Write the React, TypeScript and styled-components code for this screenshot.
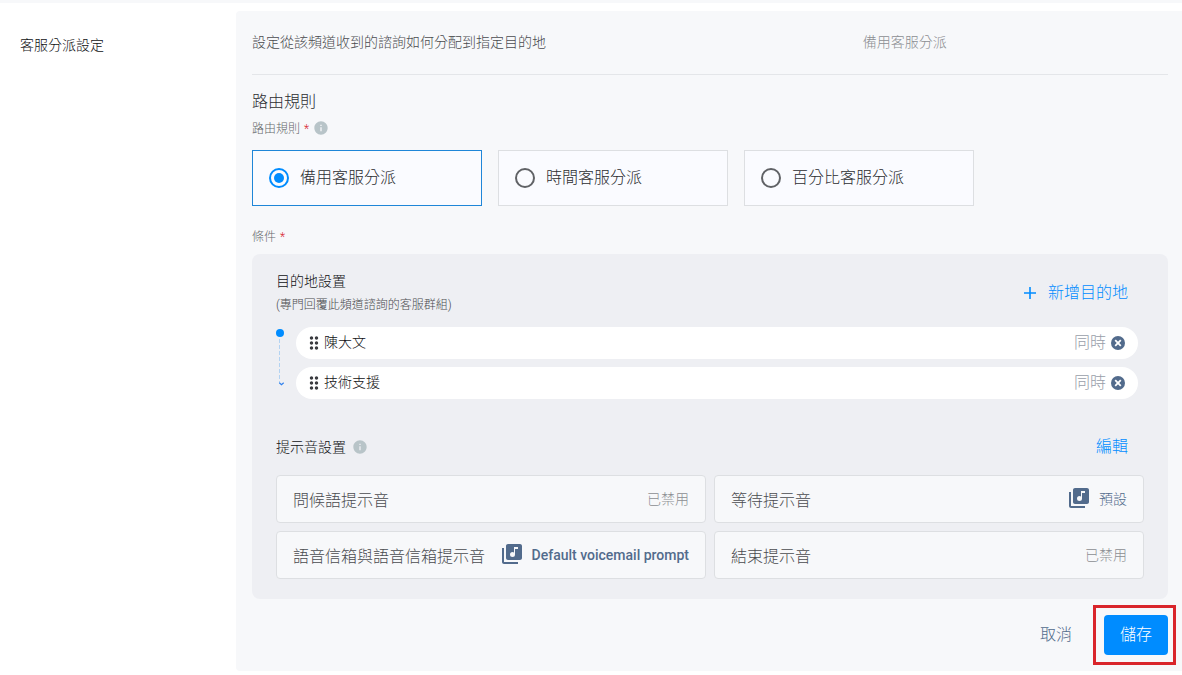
import React, { useState } from "react";
import styled, { createGlobalStyle } from "styled-components";
import { MdDragIndicator, MdInfo, MdLibraryMusic } from "react-icons/md";

const color = {
  accent: "#008cff",
  slate: "#526b8c",
  text: "#101114",
  body: "#4a4b4f",
  muted: "#8c8e92",
  label: "#66686b",
  panel: "#f7f8fa",
  box: "#eeeff3",
  line: "#dddfe2",
};

const GlobalStyle = createGlobalStyle`
  *, *::before, *::after { box-sizing: border-box; }
  body {
    margin: 0;
    background: #fff;
    color: ${color.text};
    font-family: Roboto, "Noto Sans CJK TC", sans-serif;
    font-weight: 300;
    font-size: 14px;
    line-height: 20px;
  }
  button, input { font: inherit; }
  h2, h3, h4, p, ul { margin: 0; padding: 0; font-weight: inherit; }
`;

const Page = styled.div`
  border-top: 3px solid ${color.panel};
  padding: 8px 0 4px;
`;

const Layout = styled.div`
  display: grid;
  grid-template-columns: 236px 1fr;
`;

const Side = styled.h2`
  padding: 24px 20px;
  font-size: 14px;
`;

const Panel = styled.main`
  padding: 0 14px 16px 16px;
  background: ${color.panel};
  border-radius: 4px 0 0 4px;
`;

const PanelHeader = styled.header`
  display: grid;
  grid-template-columns: 2fr 1fr;
  align-items: center;
  height: 64px;
  padding-bottom: 2px;
  border-bottom: 1px solid #e4e6e9;
`;

const Summary = styled.p<{ $muted?: boolean }>`
  color: ${(p) => (p.$muted ? color.muted : color.body)};
`;

const SectionTitle = styled.h3`
  margin-top: 17px;
  font-size: 16px;
  color: #2c2d31;
`;

const FieldLabel = styled.div<{ $top: number }>`
  display: flex;
  align-items: center;
  gap: 4px;
  margin-top: ${(p) => p.$top}px;
  font-size: 12px;
  color: ${color.label};
`;

const Required = styled.span`
  color: #d8232f;
`;

const InfoIcon = styled(MdInfo)`
  width: 16px;
  height: 16px;
  color: #b8c4c8;
`;

const LabelInfo = styled(InfoIcon)`
  margin-bottom: 3px;
`;

const RadioRow = styled.div`
  display: flex;
  flex-wrap: wrap;
  gap: 16px;
  margin-top: 11px;
`;

const RadioCard = styled.label<{ $selected: boolean }>`
  display: flex;
  align-items: center;
  gap: 11px;
  width: 230px;
  height: 56px;
  padding: 0 16px;
  border: 1px solid ${(p) => (p.$selected ? "#1f86d8" : color.line)};
  background: #fafbff;
  color: #2c2d31;
  font-size: 16px;
  cursor: pointer;
`;

const Radio = styled.input`
  appearance: none;
  display: grid;
  place-items: center;
  width: 20px;
  height: 20px;
  margin: 0;
  border: 2px solid #606266;
  border-radius: 50%;

  &:checked {
    border-color: ${color.accent};
  }
  &:checked::before {
    content: "";
    width: 10px;
    height: 10px;
    border-radius: 50%;
    background: ${color.accent};
  }
`;

const Box = styled.section`
  margin-top: 7px;
  padding: 15px 24px 20px;
  border-radius: 8px;
  background: ${color.box};
`;

const BoxHeader = styled.div`
  display: flex;
  align-items: center;
  justify-content: space-between;
`;

const BoxTitle = styled.h4`
  font-size: 14px;
  line-height: 24px;
`;

const BoxHint = styled.p`
  font-size: 12px;
  line-height: 24px;
  color: ${color.body};
`;

const TitleWithInfo = styled.div`
  display: flex;
  align-items: center;
  gap: 6px;
`;

const TextButton = styled.button<{ $slate?: boolean }>`
  display: flex;
  align-items: center;
  gap: 12px;
  height: 40px;
  padding: 0 16px;
  border: 0;
  background: none;
  color: ${(p) => (p.$slate ? color.slate : color.accent)};
  font-size: 16px;
  cursor: pointer;
`;

const Destinations = styled.div`
  display: grid;
  grid-template-columns: 20px 1fr;
  margin: 10px 6px 28px 0;
`;

const DestinationList = styled.ul`
  display: grid;
  gap: 8px;
  list-style: none;
`;

const Destination = styled.li`
  display: flex;
  align-items: center;
  height: 32px;
  padding: 0 13px 0 8px;
  border-radius: 16px;
  background: #fff;
`;

const DestinationName = styled.span`
  padding-bottom: 2px;
`;

const DragHandle = styled(MdDragIndicator)`
  width: 20px;
  height: 20px;
  color: #3a3b3f;
`;

const Mode = styled.span`
  margin-left: auto;
  margin-right: 5px;
  font-size: 16px;
  color: #989ea9;
`;

const RemoveButton = styled.button`
  display: flex;
  padding: 0;
  border: 0;
  background: none;
  color: ${color.slate};
  cursor: pointer;
`;

const Prompts = styled.div`
  display: grid;
  grid-template-columns: 1fr 1fr;
  gap: 8px;
  margin-top: 8px;
`;

const Prompt = styled.div`
  display: flex;
  align-items: center;
  justify-content: space-between;
  height: 48px;
  padding: 0 16px;
  border: 1px solid ${color.line};
  border-radius: 4px;
  background: ${color.panel};
`;

const PromptName = styled.span`
  padding-top: 4px;
  font-size: 16px;
  color: ${color.body};
`;

const PromptValue = styled.span<{ $active: boolean; $medium: boolean }>`
  display: flex;
  align-items: center;
  gap: 8px;
  font-weight: ${(p) => (p.$medium ? 500 : 300)};
  color: ${(p) => (p.$active ? color.slate : color.muted)};
`;

const PromptIcon = styled(MdLibraryMusic)`
  width: 24px;
  height: 24px;
  margin-bottom: 2px;
`;

const Actions = styled.footer`
  display: flex;
  justify-content: flex-end;
  gap: 16px;
  margin-top: 16px;
`;

const SaveButton = styled.button`
  position: relative;
  height: 40px;
  padding: 0 16px;
  border: 0;
  border-radius: 4px;
  background: ${color.accent};
  color: #fff;
  font-size: 16px;
  cursor: pointer;

  &::after {
    content: "";
    position: absolute;
    inset: -10px -8px -10px -11px;
    border: 3px solid #d9252b;
    pointer-events: none;
  }
`;

const PlusIcon = () => (
  <svg width="12" height="12" viewBox="0 0 12 12" aria-hidden="true">
    <path d="M6 0v12M0 6h12" stroke="currentColor" strokeWidth="1.6" />
  </svg>
);

const RemoveIcon = () => (
  <svg width="14" height="14" viewBox="0 0 14 14" aria-hidden="true">
    <circle cx="7" cy="7" r="7" fill="currentColor" />
    <path d="M4.2 4.2l5.6 5.6M9.8 4.2l-5.6 5.6" stroke="#fff" strokeWidth="1.8" />
  </svg>
);

const OrderLine = () => (
  <svg width="12" height="62" viewBox="0 0 12 62" aria-hidden="true">
    <circle cx="4" cy="6" r="4" fill={color.accent} />
    <path d="M3.5 12v44" stroke="#b3d3f2" strokeDasharray="4 2" />
    <path d="M3.3 55.8l2.2 2 2.2-2" fill="none" stroke="#2f80ed" strokeWidth="1.2" />
  </svg>
);

const rules = ["備用客服分派", "時間客服分派", "百分比客服分派"];
const destinations = ["陳大文", "技術支援"];
const prompts = [
  { name: "問候語提示音", value: "已禁用", active: false },
  { name: "等待提示音", value: "預設", active: true },
  { name: "語音信箱與語音信箱提示音", value: "Default voicemail prompt", active: true, latin: true },
  { name: "結束提示音", value: "已禁用", active: false },
];

export default function App() {
  const [rule, setRule] = useState(rules[0]);

  return (
    <>
      <GlobalStyle />
      <Page lang="zh-Hant">
        <Layout>
          <Side>客服分派設定</Side>
          <Panel>
            <PanelHeader>
              <Summary>設定從該頻道收到的諮詢如何分配到指定目的地</Summary>
              <Summary $muted>備用客服分派</Summary>
            </PanelHeader>

            <SectionTitle>路由規則</SectionTitle>
            <FieldLabel $top={7} id="rule-label">
              路由規則 <Required>*</Required>
              <LabelInfo />
            </FieldLabel>
            <RadioRow role="radiogroup" aria-labelledby="rule-label">
              {rules.map((name) => (
                <RadioCard key={name} $selected={name === rule}>
                  <Radio
                    type="radio"
                    name="rule"
                    checked={name === rule}
                    onChange={() => setRule(name)}
                  />
                  {name}
                </RadioCard>
              ))}
            </RadioRow>

            <FieldLabel $top={21} id="condition-label">
              條件 <Required>*</Required>
            </FieldLabel>
            <Box aria-labelledby="condition-label">
              <BoxHeader>
                <div>
                  <BoxTitle>目的地設置</BoxTitle>
                  <BoxHint>(專門回覆此頻道諮詢的客服群組)</BoxHint>
                </div>
                <TextButton type="button">
                  <PlusIcon />
                  新增目的地
                </TextButton>
              </BoxHeader>
              <Destinations>
                <OrderLine />
                <DestinationList>
                  {destinations.map((name) => (
                    <Destination key={name}>
                      <DragHandle />
                      <DestinationName>{name}</DestinationName>
                      <Mode>同時</Mode>
                      <RemoveButton type="button" aria-label="移除">
                        <RemoveIcon />
                      </RemoveButton>
                    </Destination>
                  ))}
                </DestinationList>
              </Destinations>

              <BoxHeader>
                <TitleWithInfo>
                  <BoxTitle>提示音設置</BoxTitle>
                  <InfoIcon />
                </TitleWithInfo>
                <TextButton type="button">編輯</TextButton>
              </BoxHeader>
              <Prompts>
                {prompts.map((p) => (
                  <Prompt key={p.name}>
                    <PromptName>{p.name}</PromptName>
                    <PromptValue $active={p.active} $medium={!!p.latin}>
                      {p.active && <PromptIcon />}
                      {p.value}
                    </PromptValue>
                  </Prompt>
                ))}
              </Prompts>
            </Box>

            <Actions>
              <TextButton type="button" $slate>
                取消
              </TextButton>
              <SaveButton type="button">儲存</SaveButton>
            </Actions>
          </Panel>
        </Layout>
      </Page>
    </>
  );
}
